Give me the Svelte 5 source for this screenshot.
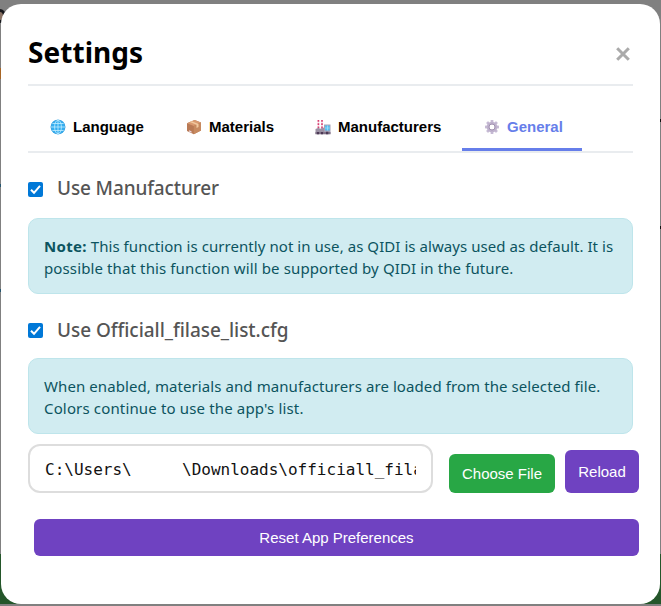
<script>
  let active = $state('General');
  const tabs = ['Language', 'Materials', 'Manufacturers', 'General'];
  const teeth = [0, 45, 90, 135, 180, 225, 270, 315];
</script>

<div class="backdrop">
  <div class="behind">
    <span class="eye"></span>
    <span class="orange"></span>
    <span class="blue"></span>
    <span class="blue low"></span>
    <span class="tick"></span>
    <span class="tick lower"></span>
    <span class="green"></span>
  </div>
  <main class="modal">
    <header>
      <h2>Settings</h2>
      <button class="close" aria-label="Close">
        <svg width="16" height="16" viewBox="0 0 16 16"><path d="M2.2 2.2 13.8 13.8M13.8 2.2 2.2 13.8" stroke="#aaa" stroke-width="3" fill="none" /></svg>
      </button>
    </header>

    <nav>
      {#each tabs as tab}
        <button class="tab {tab.toLowerCase()}" class:active={active === tab} onclick={() => (active = tab)}>
          <svg class="icon" width="16" height="16" viewBox="0 0 16 16">
            {#if tab === 'Language'}
              <circle cx="8" cy="8" r="7.3" fill="#35aef0" />
              <g fill="none" stroke="#c3edff" stroke-width=".8">
                <circle cx="8" cy="8" r="6.9" stroke="#3b9fdd" />
                <ellipse cx="8" cy="8" rx="3.4" ry="6.8" />
                <path d="M8 1v14M1 8h14M2.4 4.5h11.2M2.4 11.5h11.2" />
              </g>
            {:else if tab === 'Materials'}
              <path d="M1 4.2 8.6 1 15 3.6v8L7.8 15.2 1 12z" fill="#b97a55" />
              <path d="M1 4.2 8.6 1 15 3.6 7.8 7z" fill="#d99a70" />
              <path d="M7.8 7 15 3.6v8L7.8 15.2z" fill="#c78a60" />
              <path d="m3.7 3 2-.8 6.8 2.7v3l-2 1V5.8z" fill="#f1c9a0" />
              <path d="M3 11.2 5.5 12.3v1.4L3 12.6z" fill="#ead5df" />
            {:else if tab === 'Manufacturers'}
              <path d="M2.6 1h1.6v10H2.6zM6.2 1h1.6v10H6.2z" fill="#f4dce6" />
              <path d="M2.6 1h1.6v1.8H2.6zM6.2 1h1.6v1.8H6.2zM2.6 4.3h1.6v1.8H2.6zM6.2 4.3h1.6v1.8H6.2zM2.6 7.6h1.6v1.8H2.6zM6.2 7.6h1.6v1.8H6.2z" fill="#d93c70" />
              <path d="M9 5.5h6.5V15H9z" fill="#a7a0b4" />
              <path d="M.5 10 4.5 8.6V10L9 8.6V15H.5z" fill="#9b91a4" />
              <path d="M10 6.5h4.7v5H10z" fill="#54bff0" />
              <path d="M12.1 6.5h.6v5h-.6zM10 8.7h4.7v.6H10z" fill="#b7e6fa" />
              <path d="M.5 13h15v2.3H.5z" fill="#807287" />
              <path d="M2 13h2v2.3H2zM6 13h2v2.3H6zM11 12.8h2.3v2.5H11z" fill="#4c3955" />
            {:else}
              <g fill="#c6bad4">
                {#each teeth as angle}
                  <rect x="6.6" y="1" width="2.8" height="4" rx=".6" transform="rotate({angle} 8 8)" />
                {/each}
              </g>
              <circle cx="8" cy="8" r="4" fill="none" stroke="#bfb2cd" stroke-width="2.5" />
              <circle cx="8" cy="8" r="3" fill="none" stroke="#9c8cab" stroke-width=".9" />
            {/if}
          </svg>
          <span>{tab}</span>
        </button>
      {/each}
    </nav>

    {#snippet check(label, cls)}
      <label class="option {cls}">
        <svg width="15" height="15" viewBox="0 0 15 15"><rect width="15" height="15" rx="2" fill="#0078d7" /><path d="m3 7.8 3 3 6-7" fill="none" stroke="#fff" stroke-width="2" /></svg>
        <span>{label}</span>
      </label>
    {/snippet}

    {@render check('Use Manufacturer', 'first')}
    <div class="note">
      <div class="l1"><b>Note:</b> This function is currently not in use, as QIDI is always used as default. It is</div>
      <div class="l2">possible that this function will be supported by QIDI in the future.</div>
    </div>
    {@render check('Use Officiall_filase_list.cfg', 'second')}
    <div class="note">
      <div class="l3">When enabled, materials and manufacturers are loaded from the selected file.</div>
      <div class="l4">Colors continue to use the app's list.</div>
    </div>

    <div class="file">
      <div class="path"><div class="clip"><span class="user">C:\Users\</span><span>\Downloads\officiall_fila</span></div></div>
      <button class="choose">Choose File</button>
      <button class="reload">Reload</button>
    </div>
    <button class="reset">Reset App Preferences</button>
  </main>
</div>

<style>
  :global(body) { margin: 0; overflow: hidden; }
  * { box-sizing: border-box; }
  button { border: 0; padding: 0; margin: 0; font-family: "Liberation Sans", Arial, sans-serif; cursor: pointer; }
  .backdrop { position: relative; width: 661px; height: 606px; padding: 4px 1px 2px; background: #808080; }
  .behind span { position: absolute; }
  .eye { left: -7px; top: 9px; width: 13px; height: 14px; border: 3px solid #17181c; background: #897263; border-radius: 50%; }
  .orange { left: 0; top: 68px; width: 1px; height: 11px; background: #a76525; }
  .blue { left: 0; top: 184px; width: 1px; height: 3px; background: #25566f; }
  .blue.low { top: 289px; }
  .tick { right: 0; top: 119px; width: 1px; height: 3px; background: #111; }
  .tick.lower { top: 226px; }
  .green { left: 0; top: 554px; width: 661px; height: 50px; background: #24562a; }
  .modal { position: relative; width: 659px; height: 600px; padding: 0 27px; border-radius: 20px; background: #fff; font-family: "Noto Sans", sans-serif; }
  header { display: flex; justify-content: space-between; align-items: center; height: 82px; padding-top: 15px; border-bottom: 2px solid #e9ecef; }
  h2 { margin: 0; font-size: 28px; line-height: 36px; font-weight: 700; letter-spacing: .05px; color: #000; }
  .close { display: flex; width: 16px; height: 16px; margin: 4px 2px 0 0; background: none; }
  nav { display: flex; height: 67px; padding-top: 20px; border-bottom: 2px solid #e9ecef; }
  .tab { display: flex; align-items: center; height: 45px; padding: 0 0 5px 22px; gap: 7px; background: none; font-size: 15px; font-weight: 700; color: #000; }
  .tab .icon { flex: none; margin-top: 1px; }
  .tab.language { width: 136px; }
  .tab.materials { width: 129px; }
  .tab.manufacturers { width: 169px; }
  .tab.general { width: 120px; }
  .tab.active { padding-bottom: 2px; border-bottom: 3px solid #667eea; color: #667eea; }
  .option { display: flex; align-items: center; font-size: 19px; font-weight: 500; color: #555; gap: 14px; }
  .option.first { height: 65px; padding-top: 8px; }
  .option.second { height: 64px; padding-top: 8px; }
  .option span { margin-top: -3px; white-space: nowrap; }
  .first span { letter-spacing: -.13px; }
  .option.second span { margin-top: -1px; letter-spacing: -.04px; }
  .note { height: 76px; padding: 16px 15px; border: 1px solid #bee5eb; border-radius: 10px; background: #d1ecf1; color: #0c5460; font-size: 15px; line-height: 22px; white-space: nowrap; }
  .l1 { letter-spacing: .06px; }
  .l1 b { letter-spacing: .3px; }
  .l2 { letter-spacing: .12px; }
  .l3 { letter-spacing: .085px; }
  .l4 { letter-spacing: .15px; }
  .file { display: flex; align-items: flex-end; width: 611px; height: 59px; }
  .path { display: flex; align-items: center; width: 405px; height: 49px; padding: 2px 15px 0; border: 2px solid #ddd; border-radius: 12px; font: 16px "DejaVu Sans Mono", monospace; color: #111; }
  .clip { display: flex; width: 100%; overflow: hidden; white-space: nowrap; }
  .user { flex: 0 0 137px; }
  .choose, .reload, .reset { border-radius: 6px; color: #fff; font-size: 15px; background: #6f42c1; }
  .choose { width: 106px; height: 39px; margin-left: 16px; background: #28a745; }
  .reload { width: 74px; height: 43px; margin-left: 10px; }
  .reset { display: block; width: 605px; height: 37px; margin: 26px 0 0 6px; }
</style>
